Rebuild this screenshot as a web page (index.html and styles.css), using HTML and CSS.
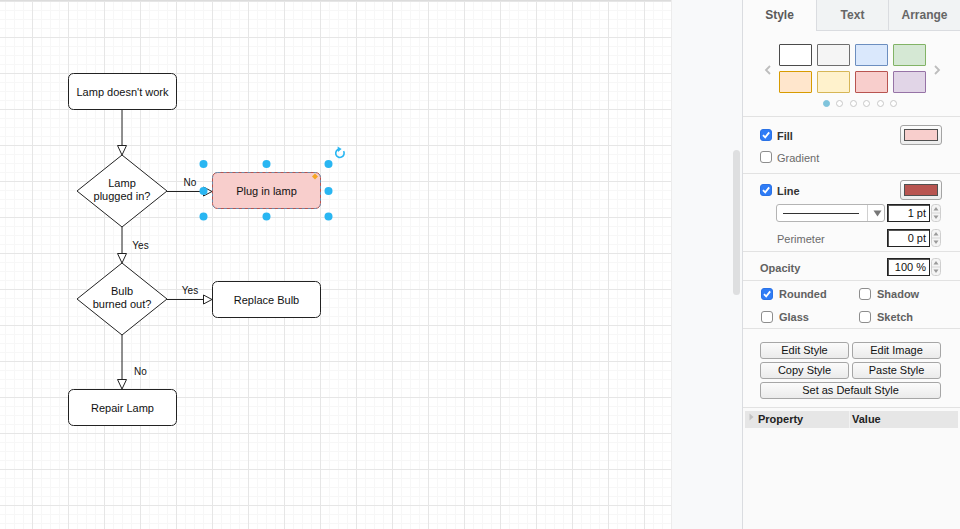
FILE: index.html
```html
<!DOCTYPE html>
<html>
<head>
<meta charset="utf-8">
<title>Lamp flowchart</title>
<link rel="stylesheet" href="styles.css">
</head>
<body>
<div class="app">
  <main class="canvas">
    <div class="page">
      <svg class="diagram" width="671" height="529" viewBox="0 0 671 529">
        <g class="shapes" fill="#fff" stroke="#222" stroke-width="1">
          <rect x="68.5" y="73.5" width="108" height="36" rx="5"/>
          <path d="M122 155 L167 191 L122 227 L77 191 Z"/>
          <path d="M122 263 L167 299 L122 335 L77 299 Z"/>
          <rect x="212.5" y="281.5" width="108" height="36" rx="5"/>
          <rect x="68.5" y="389.5" width="108" height="36" rx="5"/>
          <rect x="212.5" y="172.5" width="108" height="36" rx="5" fill="#f8cecc" stroke="#b85450"/>
          <rect x="212.5" y="172.5" width="108" height="36" rx="5" fill="none" stroke="#29b6f2" stroke-opacity="0.55" stroke-dasharray="3 3"/>
          <path d="M122 109.5 V145.5" fill="none"/>
          <path d="M117.5 145.5 L126.5 145.5 L122 155 Z"/>
          <path d="M167 191.5 H203.5" fill="none"/>
          <path d="M203.5 187 L203.5 196 L212 191.5 Z"/>
          <path d="M122 227 V253.5" fill="none"/>
          <path d="M117.5 253.5 L126.5 253.5 L122 263 Z"/>
          <path d="M167 299.5 H203.5" fill="none"/>
          <path d="M203.5 295 L203.5 304 L212 299.5 Z"/>
          <path d="M122 335 V379.5" fill="none"/>
          <path d="M117.5 379.5 L126.5 379.5 L122 389 Z"/>
        </g>
        <g class="labels" font-family="Liberation Sans, Arial, sans-serif" font-size="11" fill="#111" text-anchor="middle">
          <text x="122.5" y="96">Lamp doesn't work</text>
          <text x="122" y="187">Lamp</text>
          <text x="122" y="200">plugged in?</text>
          <text x="266.5" y="195">Plug in lamp</text>
          <text x="122" y="295">Bulb</text>
          <text x="122" y="307.5">burned out?</text>
          <text x="266.5" y="303.5">Replace Bulb</text>
          <text x="122.5" y="412">Repair Lamp</text>
          <text x="190" y="185.5" font-size="10">No</text>
          <text x="140.5" y="248.5" font-size="10">Yes</text>
          <text x="190" y="293.5" font-size="10">Yes</text>
          <text x="140.5" y="374.5" font-size="10">No</text>
        </g>
        <g class="handles" fill="#29b6f2">
          <circle cx="203.5" cy="164" r="4"/>
          <circle cx="266.5" cy="164" r="4"/>
          <circle cx="328.5" cy="164" r="4"/>
          <circle cx="203.5" cy="191" r="4"/>
          <circle cx="328.5" cy="191" r="4"/>
          <circle cx="203.5" cy="216.5" r="4"/>
          <circle cx="266.5" cy="216.5" r="4"/>
          <circle cx="328.5" cy="216.5" r="4"/>
          <path d="M315 173.5 L318 176.5 L315 179.5 L312 176.5 Z" fill="#f5a623"/>
          <path d="M343.6 151.2 A4.2 4.2 0 1 1 339.2 149.1" fill="none" stroke="#29b6f2" stroke-width="1.6"/>
          <path d="M337.6 146.6 L341.6 149.1 L338 152 Z"/>
        </g>
      </svg>
    </div>
    <div class="gutter"><div class="scrollbar"></div></div>
  </main>

  <aside class="panel">
    <nav class="tabs">
      <div class="tab active">Style</div>
      <div class="tab">Text</div>
      <div class="tab">Arrange</div>
    </nav>

    <section class="swatches">
      <div class="swatch-row">
        <svg class="chev" width="10" height="12" viewBox="0 0 10 12"><path d="M7 2 L3 6 L7 10" fill="none" stroke="#bdbdbd" stroke-width="1.8"/></svg>
        <div class="swatch-grid">
          <span class="sw sw-white"></span>
          <span class="sw sw-gray"></span>
          <span class="sw sw-blue"></span>
          <span class="sw sw-green"></span>
          <span class="sw sw-orange"></span>
          <span class="sw sw-yellow"></span>
          <span class="sw sw-red"></span>
          <span class="sw sw-purple"></span>
        </div>
        <svg class="chev" width="10" height="12" viewBox="0 0 10 12"><path d="M3 2 L7 6 L3 10" fill="none" stroke="#bdbdbd" stroke-width="1.8"/></svg>
      </div>
      <div class="dots">
        <span class="dot on"></span><span class="dot"></span><span class="dot"></span><span class="dot"></span><span class="dot"></span><span class="dot"></span>
      </div>
    </section>

    <section class="sec sec-fill">
      <div class="row">
        <label class="cbl"><span class="cb on"><svg width="10" height="10" viewBox="0 0 10 10"><path d="M2 5.2 L4.2 7.4 L8.2 2.4" fill="none" stroke="#fff" stroke-width="1.8"/></svg></span><span class="lbl-strong">Fill</span></label>
        <span class="color-btn"><span class="color-in fill-pink"></span></span>
      </div>
      <div class="row">
        <label class="cbl"><span class="cb"></span><span class="lbl-muted">Gradient</span></label>
      </div>
    </section>

    <section class="sec sec-line">
      <div class="row">
        <label class="cbl"><span class="cb on"><svg width="10" height="10" viewBox="0 0 10 10"><path d="M2 5.2 L4.2 7.4 L8.2 2.4" fill="none" stroke="#fff" stroke-width="1.8"/></svg></span><span class="lbl-strong">Line</span></label>
        <span class="color-btn"><span class="color-in fill-red"></span></span>
      </div>
      <div class="row-s row-pattern">
        <div class="select">
          <span class="select-line"></span>
          <span class="select-div"></span>
          <svg class="select-arrow" width="9" height="7" viewBox="0 0 9 7"><path d="M0.5 0.5 H8.5 L4.5 6.5 Z" fill="#777"/></svg>
        </div>
        <span class="num">1 pt</span>
        <svg class="spin" width="10" height="18" viewBox="0 0 10 18"><rect x="0.5" y="0.5" width="9" height="17" rx="3" fill="#f4f4f4" stroke="#cfcfcf"/><path d="M5 3 L7.5 6.5 H2.5 Z" fill="#9a9a9a"/><path d="M2.5 11.5 H7.5 L5 15 Z" fill="#9a9a9a"/><path d="M1 9 H9" stroke="#d6d6d6"/></svg>
      </div>
      <div class="row-s row-perim">
        <span class="lbl-muted perim">Perimeter</span>
        <span class="num">0 pt</span>
        <svg class="spin" width="10" height="18" viewBox="0 0 10 18"><rect x="0.5" y="0.5" width="9" height="17" rx="3" fill="#f4f4f4" stroke="#cfcfcf"/><path d="M5 3 L7.5 6.5 H2.5 Z" fill="#9a9a9a"/><path d="M2.5 11.5 H7.5 L5 15 Z" fill="#9a9a9a"/><path d="M1 9 H9" stroke="#d6d6d6"/></svg>
      </div>
    </section>

    <section class="sec sec-opacity">
      <div class="row-s">
        <span class="lbl-gray opac">Opacity</span>
        <span class="num">100 %</span>
        <svg class="spin" width="10" height="18" viewBox="0 0 10 18"><rect x="0.5" y="0.5" width="9" height="17" rx="3" fill="#f4f4f4" stroke="#cfcfcf"/><path d="M5 3 L7.5 6.5 H2.5 Z" fill="#9a9a9a"/><path d="M2.5 11.5 H7.5 L5 15 Z" fill="#9a9a9a"/><path d="M1 9 H9" stroke="#d6d6d6"/></svg>
      </div>
    </section>

    <section class="sec sec-opts">
      <label class="cbl opt"><span class="cb on"><svg width="10" height="10" viewBox="0 0 10 10"><path d="M2 5.2 L4.2 7.4 L8.2 2.4" fill="none" stroke="#fff" stroke-width="1.8"/></svg></span><span class="lbl-gray">Rounded</span></label>
      <label class="cbl opt"><span class="cb"></span><span class="lbl-gray">Shadow</span></label>
      <label class="cbl opt"><span class="cb"></span><span class="lbl-gray">Glass</span></label>
      <label class="cbl opt"><span class="cb"></span><span class="lbl-gray">Sketch</span></label>
    </section>

    <section class="sec sec-buttons">
      <button class="btn">Edit Style</button>
      <button class="btn">Edit Image</button>
      <button class="btn">Copy Style</button>
      <button class="btn">Paste Style</button>
      <button class="btn btn-wide">Set as Default Style</button>
    </section>

    <section class="sec sec-props">
      <div class="props-head">
        <div class="ph-prop"><svg class="ph-tri" width="5" height="8" viewBox="0 0 5 8"><path d="M0.5 0.5 L4.5 4 L0.5 7.5 Z" fill="#c2c2c2"/></svg>Property</div>
        <div class="ph-val">Value</div>
      </div>
    </section>
  </aside>
</div>
</body>
</html>
```

FILE: styles.css
```css
html, body {
  margin: 0;
  padding: 0;
  background: #fff;
}

body {
  font-family: "Liberation Sans", Arial, Helvetica, sans-serif;
}

.app {
  display: flex;
  width: 960px;
  height: 529px;
  overflow: hidden;
}

/* ---------- canvas ---------- */
.canvas {
  display: flex;
  flex: none;
  width: 742px;
  height: 529px;
}

.page {
  flex: none;
  width: 671px;
  height: 529px;
  background-color: #fff;
  background-image:
    linear-gradient(to right, #e6e6e6 1px, transparent 1px),
    linear-gradient(to bottom, #e6e6e6 1px, transparent 1px),
    linear-gradient(to right, #f7f7f7 1px, transparent 1px),
    linear-gradient(to bottom, #f7f7f7 1px, transparent 1px);
  background-size: 36px 36px, 36px 36px, 9px 9px, 9px 9px;
  background-position: 32px 1px, 32px 1px, 5px 1px, 5px 1px;
  box-shadow: inset 0 1px 0 #dcdcdc;
}

.diagram {
  display: block;
}

.gutter {
  flex: none;
  width: 71px;
  height: 529px;
  box-sizing: border-box;
  background: #f8f9fa;
  border-left: 1px solid #ececec;
  display: flex;
  justify-content: flex-end;
  align-items: flex-start;
  padding: 150px 2px 0 0;
}

.scrollbar {
  width: 7px;
  height: 145px;
  border-radius: 4px;
  background: #dedfe0;
}

/* ---------- panel ---------- */
.panel {
  flex: none;
  width: 218px;
  height: 529px;
  box-sizing: border-box;
  border-left: 1px solid #dadce0;
  background: #fbfbfb;
  display: flex;
  flex-direction: column;
  font-size: 11px;
  color: #333;
}

.tabs {
  display: flex;
  height: 31px;
  flex: none;
}

.tab {
  flex: 0 0 72px;
  box-sizing: border-box;
  display: flex;
  align-items: center;
  justify-content: center;
  font-size: 12px;
  font-weight: bold;
  color: #666;
  background: #f1f3f4;
  border-left: 1px solid #dadce0;
  border-bottom: 1px solid #dadce0;
  padding-bottom: 1px;
}

.tab.active {
  flex-basis: 73px;
  background: #fbfbfb;
  border-left: none;
  border-bottom: none;
  color: #5a5a5a;
}

.swatches {
  flex: none;
  height: 85px;
  box-sizing: border-box;
  padding: 13px 0 0 2px;
}

.swatch-row {
  display: flex;
  align-items: center;
  justify-content: center;
  gap: 6px;
}

.chev {
  display: block;
  margin-top: 3px;
}

.swatch-grid {
  display: grid;
  grid-template-columns: repeat(4, 33px);
  grid-auto-rows: 22px;
  column-gap: 5px;
  row-gap: 5px;
}

.sw {
  display: block;
  box-sizing: border-box;
  border: 1px solid;
  border-radius: 1px;
}

.sw-white { background: #ffffff; border-color: #4a4a4a; }
.sw-gray { background: #f5f5f5; border-color: #6e6e6e; }
.sw-blue { background: #dae8fc; border-color: #6c8ebf; }
.sw-green { background: #d5e8d4; border-color: #82b366; }
.sw-orange { background: #ffe6cc; border-color: #d79b00; }
.sw-yellow { background: #fff2cc; border-color: #d6b656; }
.sw-red { background: #f8cecc; border-color: #b85450; }
.sw-purple { background: #e1d5e7; border-color: #9673a6; }

.dots {
  display: flex;
  justify-content: center;
  gap: 6.4px;
  margin-top: 7px;
  padding-left: 15px;
}

.dot {
  width: 7px;
  height: 7px;
  box-sizing: border-box;
  border-radius: 50%;
  border: 1px solid #c8c8c8;
  background: #fff;
}

.dot.on {
  background: #7fc4dc;
  border-color: #7fc4dc;
}

.sec {
  flex: none;
  border-top: 1px solid #e2e2e2;
  box-sizing: border-box;
}

.row {
  display: flex;
  align-items: center;
  justify-content: space-between;
  height: 22px;
}

.row-s {
  display: flex;
  align-items: center;
  height: 18px;
}

.cbl {
  display: flex;
  align-items: center;
  gap: 5px;
}

.cb {
  display: inline-flex;
  align-items: center;
  justify-content: center;
  width: 12px;
  height: 12px;
  box-sizing: border-box;
  border: 1px solid #8d8d8d;
  border-radius: 3px;
  background: #fff;
}

.cb.on {
  background: #2f7cf6;
  border-color: #2a72e6;
}

.cb svg {
  display: block;
}

.lbl-strong {
  font-weight: bold;
  color: #333;
  padding-top: 1px;
}

.lbl-muted {
  color: #6a6a6a;
  padding-top: 1px;
}

.lbl-gray {
  font-weight: bold;
  color: #616161;
  padding-top: 1px;
}

.color-btn {
  display: block;
  width: 42px;
  height: 20px;
  box-sizing: border-box;
  border: 1px solid #a4a4a4;
  border-radius: 3px;
  background: linear-gradient(#fdfdfd, #ececec);
  padding: 3px 3px;
}

.color-in {
  display: block;
  height: 100%;
  box-sizing: border-box;
  border: 1px solid #505050;
}

.fill-pink { background: #f8cecc; }
.fill-red { background: #b85450; }

.sec-fill {
  padding: 7px 18px 5px 17px;
}

.sec-line {
  padding: 5px 18px 4px 17px;
}

.row-pattern {
  margin-top: 3px;
}

.row-perim {
  margin-top: 7px;
}

.select {
  flex: none;
  width: 109px;
  height: 18px;
  margin-left: 16px;
  margin-right: 2px;
  box-sizing: border-box;
  border: 1px solid #b4b4b4;
  border-radius: 3px;
  background: #fff;
  display: flex;
  align-items: center;
}

.select-line {
  flex: none;
  width: 76px;
  height: 1px;
  margin-left: 6px;
  background: #333;
}

.select-div {
  flex: none;
  width: 1px;
  height: 16px;
  margin-left: 8px;
  background: #d0d0d0;
}

.select-arrow {
  display: block;
  margin-left: 5px;
}

.num {
  flex: none;
  width: 43px;
  height: 18px;
  box-sizing: border-box;
  border: 1px solid #222;
  box-shadow: inset 1px 1px 0 #555;
  background: #fff;
  color: #111;
  font-size: 11px;
  line-height: 16px;
  text-align: right;
  padding-right: 3px;
  margin-right: 1px;
}

.spin {
  display: block;
  flex: none;
}

.perim {
  flex: none;
  width: 110px;
  margin-left: 17px;
}

.sec-opacity {
  padding: 6px 20px 4px 17px;
}

.opac {
  flex: none;
  width: 127px;
}

.sec-opts {
  display: grid;
  grid-template-columns: 98px 1fr;
  grid-auto-rows: 23px;
  padding: 1px 0 0 18px;
}

.opt {
  gap: 6px;
}

.sec-buttons {
  display: grid;
  grid-template-columns: 89px 89px;
  grid-auto-rows: 17px;
  column-gap: 3px;
  row-gap: 3px;
  padding: 13px 19px 8px 17px;
}

.btn {
  margin: 0;
  padding: 0;
  box-sizing: border-box;
  border: 1px solid #a6a6a6;
  border-radius: 3px;
  background: linear-gradient(#fbfbfb, #ebebeb);
  font-family: "Liberation Sans", Arial, sans-serif;
  font-size: 11px;
  color: #111;
  line-height: 15px;
  text-align: center;
}

.btn-wide {
  grid-column: span 2;
}

.sec-props {
  flex: 1;
  padding: 3px 2px 0 2px;
  background: #fafafa;
}

.props-head {
  display: flex;
  height: 17px;
  background: #e6e6e6;
  font-weight: bold;
  color: #222;
  font-size: 11px;
  line-height: 17px;
}

.ph-prop {
  flex: none;
  width: 105px;
  box-sizing: border-box;
  display: flex;
  align-items: center;
  padding: 0 0 0 4px;
  border-right: 1px solid #f2f2f2;
}

.ph-tri {
  display: block;
  margin-right: 4px;
  margin-top: -6px;
}

.ph-val {
  display: flex;
  align-items: center;
  padding: 0 0 0 2px;
}
```
